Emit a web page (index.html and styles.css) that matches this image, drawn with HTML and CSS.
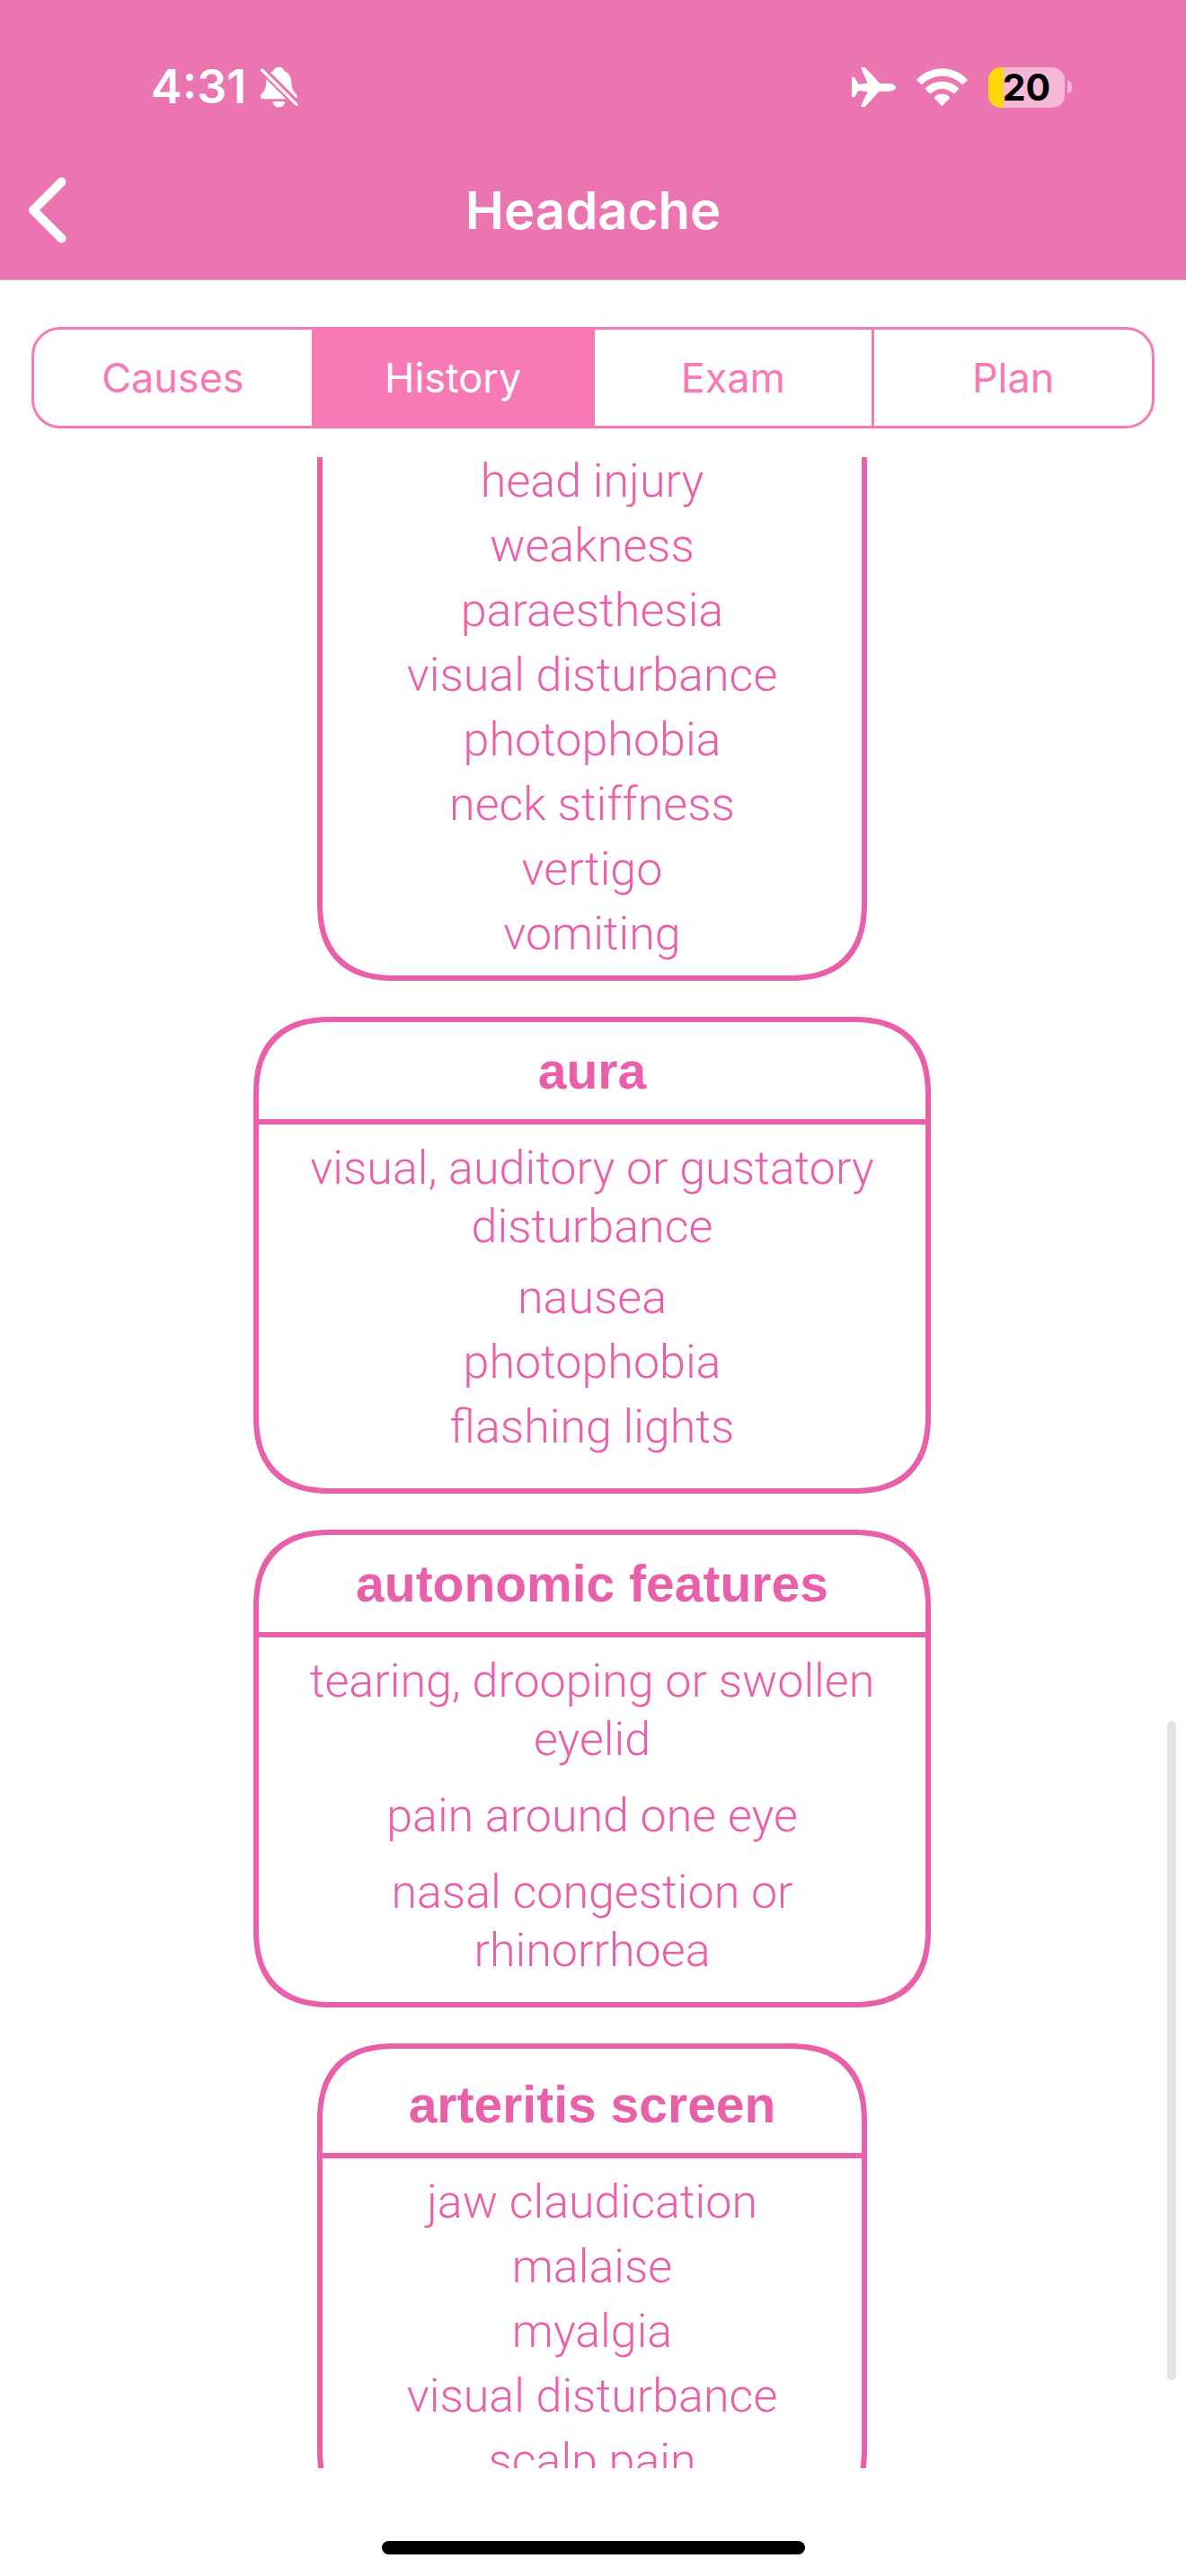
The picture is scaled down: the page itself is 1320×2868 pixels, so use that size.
FILE: index.html
```html
<!DOCTYPE html>
<html lang="en">
<head>
<meta charset="utf-8">
<meta name="viewport" content="width=device-width, initial-scale=1">
<title>Headache</title>
<link rel="stylesheet" href="styles.css">
</head>
<body>
<header class="header">
  <div class="status">
    <div class="status-group status-left">
      <span class="time">4:31</span>
      <svg class="icon-bell" viewBox="0 0 126 136" aria-hidden="true">
        <path fill="#fff" d="M61 1C51 1 44 7 41 15C26 22 19 36 18 54C18 72 14 80 5 89C2 92 0 95 0 99C0 105 3 108 9 108H113C119 108 122 105 122 99C122 95 120 92 116 88C107 79 104 70 103 52C102 35 95 22 80 15C77 7 71 1 61 1Z"/>
        <path fill="#fff" d="M40 116H82C80 128 72 135 61 135S42 128 40 116Z"/>
        <path class="bell-cut" d="M-5 -1L132 136"/>
        <path stroke="#fff" stroke-width="10" stroke-linecap="round" d="M5 11L120 126"/>
      </svg>
    </div>
    <div class="status-group status-right">
      <svg class="icon-plane" viewBox="0 0 147 132" aria-hidden="true">
        <path fill="#fff" d="M31 3C31 1 33 0 36 0H41C44 0 46 2 48 4L94 54H124C137 54 147 60 147 67S137 80 124 80H92L47 128C45 131 43 132 40 132H34C31 132 30 130 31 128L53 81L22 78L11 96C9 99 6 100 2 100Q0 100 0 98V35Q0 33 2 33H6C9 33 11 35 12 37L22 56L53 53Z"/>
      </svg>
      <svg class="icon-wifi" viewBox="0 0 171 127" aria-hidden="true">
        <path fill="#fff" d="M2 36C48 -11 123 -11 169 36Q172 39 169 42L157 53Q154 56 151 53C115 18 56 18 20 53Q17 56 14 53L2 42Q-1 39 2 36ZM31 66C61 37 110 37 140 66Q143 69 140 72L128 84Q125 87 122 84C102 65 69 65 49 84Q46 87 43 84L31 72Q28 69 31 66ZM61 96C75 83 96 83 110 96Q113 99 110 102L89 124Q85 128 82 124L61 102Q58 99 61 96Z"/>
      </svg>
      <div class="battery"><span class="battery-body">20</span><span class="battery-nub"></span></div>
    </div>
  </div>
  <div class="titlebar">
    <button class="back" type="button" aria-label="Back">
      <svg class="icon-back" viewBox="0 0 43 74" aria-hidden="true"><path d="M37.500 5.500L6 37L37.500 68.500"/></svg>
    </button>
    <h1 class="title">Headache</h1>
  </div>
</header>
<nav class="tabs" aria-label="Sections">
  <button class="tab" type="button">Causes</button>
  <button class="tab tab-active" type="button" aria-current="true">History</button>
  <button class="tab" type="button">Exam</button>
  <button class="tab" type="button">Plan</button>
</nav>
<main class="viewport">
  <div class="cards">
    <section class="card card-narrow card-continued">
      <ul class="list">
        <li>head injury</li>
        <li>weakness</li>
        <li>paraesthesia</li>
        <li>visual disturbance</li>
        <li>photophobia</li>
        <li>neck stiffness</li>
        <li>vertigo</li>
        <li>vomiting</li>
      </ul>
    </section>
    <section class="card">
      <h2 class="card-title">aura</h2>
      <ul class="list list-roomy">
        <li class="long">visual, auditory or gustatory disturbance</li>
        <li>nausea</li>
        <li>photophobia</li>
        <li>flashing lights</li>
      </ul>
    </section>
    <section class="card">
      <h2 class="card-title">autonomic features</h2>
      <ul class="list list-loose">
        <li>tearing, drooping or swollen eyelid</li>
        <li>pain around one eye</li>
        <li>nasal congestion or rhinorrhoea</li>
      </ul>
    </section>
    <section class="card card-narrow">
      <h2 class="card-title card-title-tall">arteritis screen</h2>
      <ul class="list list-roomy">
        <li>jaw claudication</li>
        <li>malaise</li>
        <li>myalgia</li>
        <li>visual disturbance</li>
        <li>scalp pain</li>
      </ul>
    </section>
  </div>
  <div class="scrollbar"></div>
</main>
<footer class="footer"><div class="home-indicator"></div></footer>
</body>
</html>
```
FILE: styles.css
```css
:root {
  --header: #eb75b0;
  --tab: #f779b6;
  --pink: #e95fa9;
}

* {
  box-sizing: border-box;
}

body {
  margin: 0;
  height: 100vh;
  display: flex;
  flex-direction: column;
  background: #fff;
  font-family: Inter, "Liberation Sans", sans-serif;
}

button {
  margin: 0;
  padding: 0;
  border: 0;
  background: none;
  font: inherit;
  color: inherit;
}

svg {
  display: block;
  fill: none;
}

/* Header */
.header {
  flex: none;
  background: var(--header);
  border-bottom: 1px solid #b9b9b9;
  color: #fff;
}

.status {
  display: flex;
  justify-content: space-between;
  align-items: center;
  height: 157px;
  padding: 37px 127px 0 168px;
}

.status-group {
  display: flex;
  align-items: center;
}

.status-left {
  gap: 16px;
}

.status-right {
  gap: 23px;
}

.time {
  font-size: 52px;
  font-weight: 600;
  line-height: 64px;
}

.icon-bell {
  width: 42px;
  height: 46px;
}

.bell-cut {
  stroke: var(--header);
  stroke-width: 26;
}

.icon-plane {
  width: 49px;
  height: 44px;
}

.icon-wifi {
  width: 57px;
  height: 42px;
}

.battery {
  display: flex;
  align-items: center;
  gap: 3px;
}

.battery-body {
  width: 85px;
  border-radius: 14px;
  background: linear-gradient(90deg, #ffd60a 17px, #f5b8d7 17px);
  color: #000;
  font-size: 41px;
  font-weight: 700;
  line-height: 45px;
  text-align: center;
}

.battery-nub {
  width: 5px;
  height: 14px;
  border-radius: 0 5px 5px 0;
  background: #f5b8d7;
}

.titlebar {
  display: grid;
  grid-template-columns: 100px 1fr 100px;
  align-items: center;
  height: 154px;
}

.back {
  padding-left: 31px;
}

.icon-back {
  width: 43px;
  height: 74px;
}

.icon-back path {
  stroke: #fff;
  stroke-width: 10;
  stroke-linecap: round;
  stroke-linejoin: round;
}

.title {
  margin: 0;
  font-size: 58px;
  font-weight: 600;
  line-height: 72px;
  text-align: center;
}

/* Segmented control */
.tabs {
  flex: none;
  display: flex;
  height: 113px;
  margin: 52px 35px 32px;
  border: 3px solid var(--tab);
  border-radius: 32px;
  overflow: hidden;
}

.tab {
  flex: 1;
  color: var(--tab);
  font-size: 45px;
}

.tab + .tab {
  border-left: 3px solid var(--tab);
}

.tab-active {
  background: var(--tab);
  color: #fff;
}

/* Scrolling cards */
.viewport {
  position: relative;
  flex: 1;
  min-height: 0;
  overflow: hidden;
}

.cards {
  display: flex;
  flex-direction: column;
  align-items: center;
  gap: 40px;
  padding-right: 2px;
}

.card {
  flex: none;
  width: 754px;
  max-width: 100%;
  border: 6px solid var(--pink);
  border-radius: 75px;
  color: var(--pink);
}

/* Smoother, continuous corners where the browser can draw them */
@supports (corner-shape: superellipse(1.3)) {
  .card {
    border-radius: 88px;
    corner-shape: superellipse(1.3);
  }
}

.card-narrow {
  width: 612px;
}

.card-continued {
  margin-top: -6px;
  border-top: 0;
  border-top-left-radius: 0;
  border-top-right-radius: 0;
}

.card-title {
  margin: 0;
  border-bottom: 6px solid var(--pink);
  font-family: "Liberation Sans", sans-serif;
  font-size: 57px;
  font-weight: 700;
  line-height: 108px;
  text-align: center;
}

.card-title-tall {
  padding-top: 8px;
}

.list {
  display: flex;
  flex-direction: column;
  gap: 7px;
  margin: 0;
  padding: 0 40px 14px;
  list-style: none;
  font-family: Roboto, "Liberation Sans", sans-serif;
  font-size: 52px;
  font-weight: 300;
  line-height: 65px;
  text-align: center;
}

.card-title + .list {
  padding-top: 16px;
}

.list-roomy {
  padding-bottom: 36px;
}

.list-loose {
  gap: 20px;
  padding-bottom: 25px;
}

.long {
  margin-bottom: 7px;
}

.scrollbar {
  position: absolute;
  right: 11px;
  bottom: 98px;
  width: 10px;
  height: 734px;
  border-radius: 5px;
  background: #e3e3e3;
}

/* Home indicator */
.footer {
  flex: none;
  padding: 81px 0 24px;
}

.home-indicator {
  width: 471px;
  height: 15px;
  margin: 0 auto;
  border-radius: 8px;
  background: #000;
}
```
